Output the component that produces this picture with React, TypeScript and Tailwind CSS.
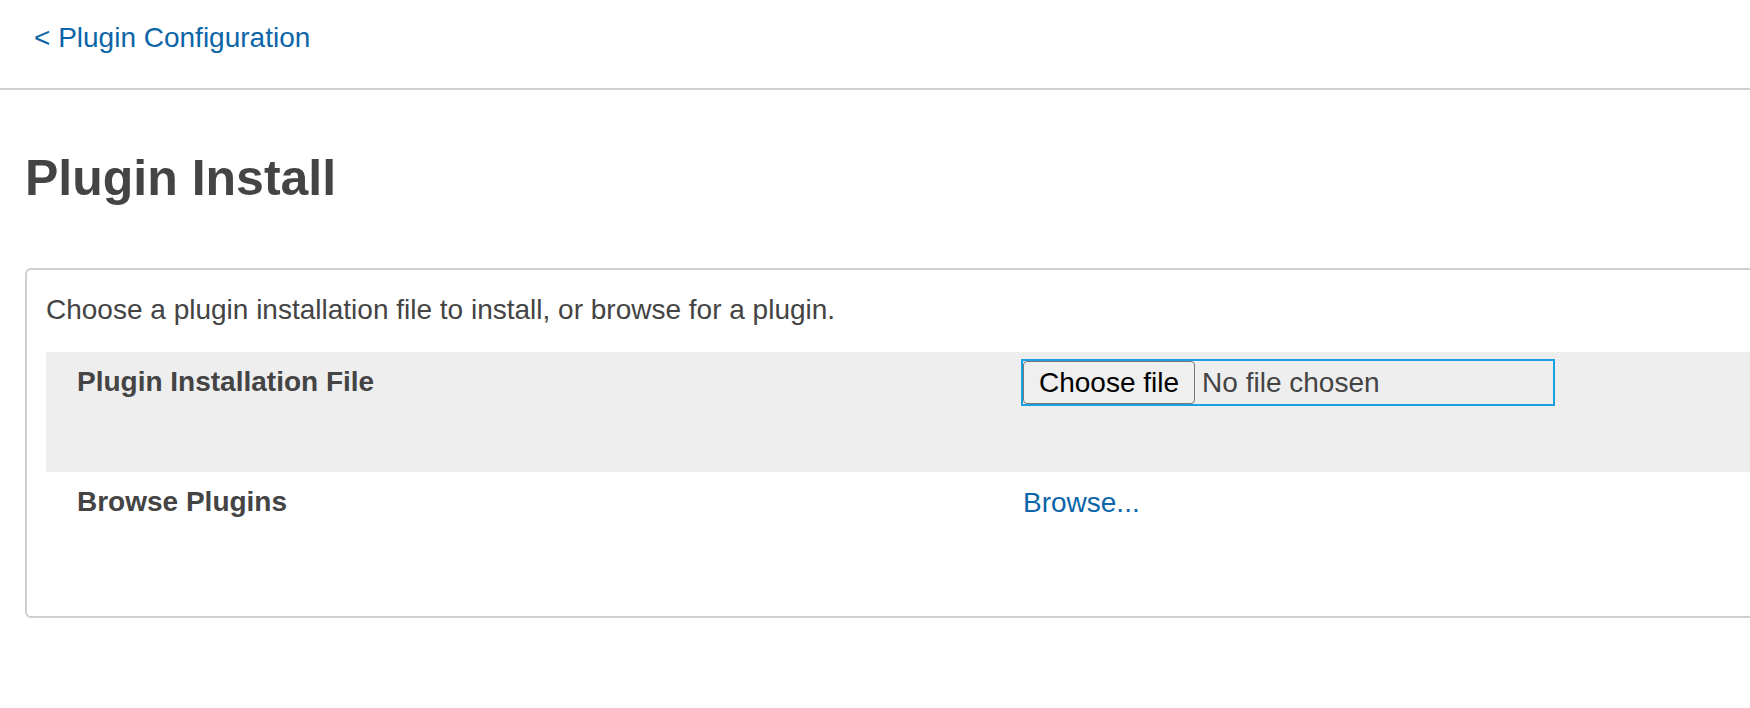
import { useState } from 'react';

type Row = {
  label: string;
  shaded?: boolean;
  value: React.ReactNode;
};

function FilePicker() {
  const [fileName] = useState<string | null>(null);
  return (
    <div className="flex h-[47px] w-[534px] items-center border-2 border-[#1ba1e2]">
      <span className="flex h-[43px] items-center rounded-[4px] border-[1.5px] border-[#767676] bg-[#efefef] px-[15px] text-black">
        Choose file
      </span>
      <span className="ml-[7px] text-[#444]">{fileName ?? 'No file chosen'}</span>
    </div>
  );
}

export default function App() {
  const rows: Row[] = [
    { label: 'Plugin Installation File', shaded: true, value: <FilePicker /> },
    {
      label: 'Browse Plugins',
      value: (
        <a href="#" className="block pt-[4px] pl-[2px] text-[#0b65a8]">
          Browse...
        </a>
      ),
    },
  ];

  return (
    <div className="min-h-screen w-full overflow-x-hidden bg-white font-['Liberation_Sans',Arial,sans-serif] text-[28px] leading-[40px] text-[#444]">
      <header className="h-[90px] border-b-2 border-[#d0d0d0] pl-[34px] pt-[18px]">
        <a href="#" className="text-[#0b65a8]">
          &lt; Plugin Configuration
        </a>
      </header>

      <h1 className="mt-[60px] pl-[25px] text-[50px] font-bold leading-[56px] text-[#444]">Plugin Install</h1>

      <section className="mt-[62px] mr-[-40px] ml-[25px] rounded-[6px] border-2 border-[#cfcfcf] pt-[20px] pb-[24px] pl-[19px]">
        <p>Choose a plugin installation file to install, or browse for a plugin.</p>

        <div className="mt-[22px]">
          {rows.map((row) => (
            <div
              key={row.label}
              className={`flex h-[120px] items-start ${row.shaded ? 'bg-[#eeeeee]' : ''}`}
            >
              <div className="w-[975px] shrink-0 pt-[10px] pl-[31px] font-bold">{row.label}</div>
              <div className="pt-[7px]">{row.value}</div>
            </div>
          ))}
        </div>
      </section>
    </div>
  );
}
